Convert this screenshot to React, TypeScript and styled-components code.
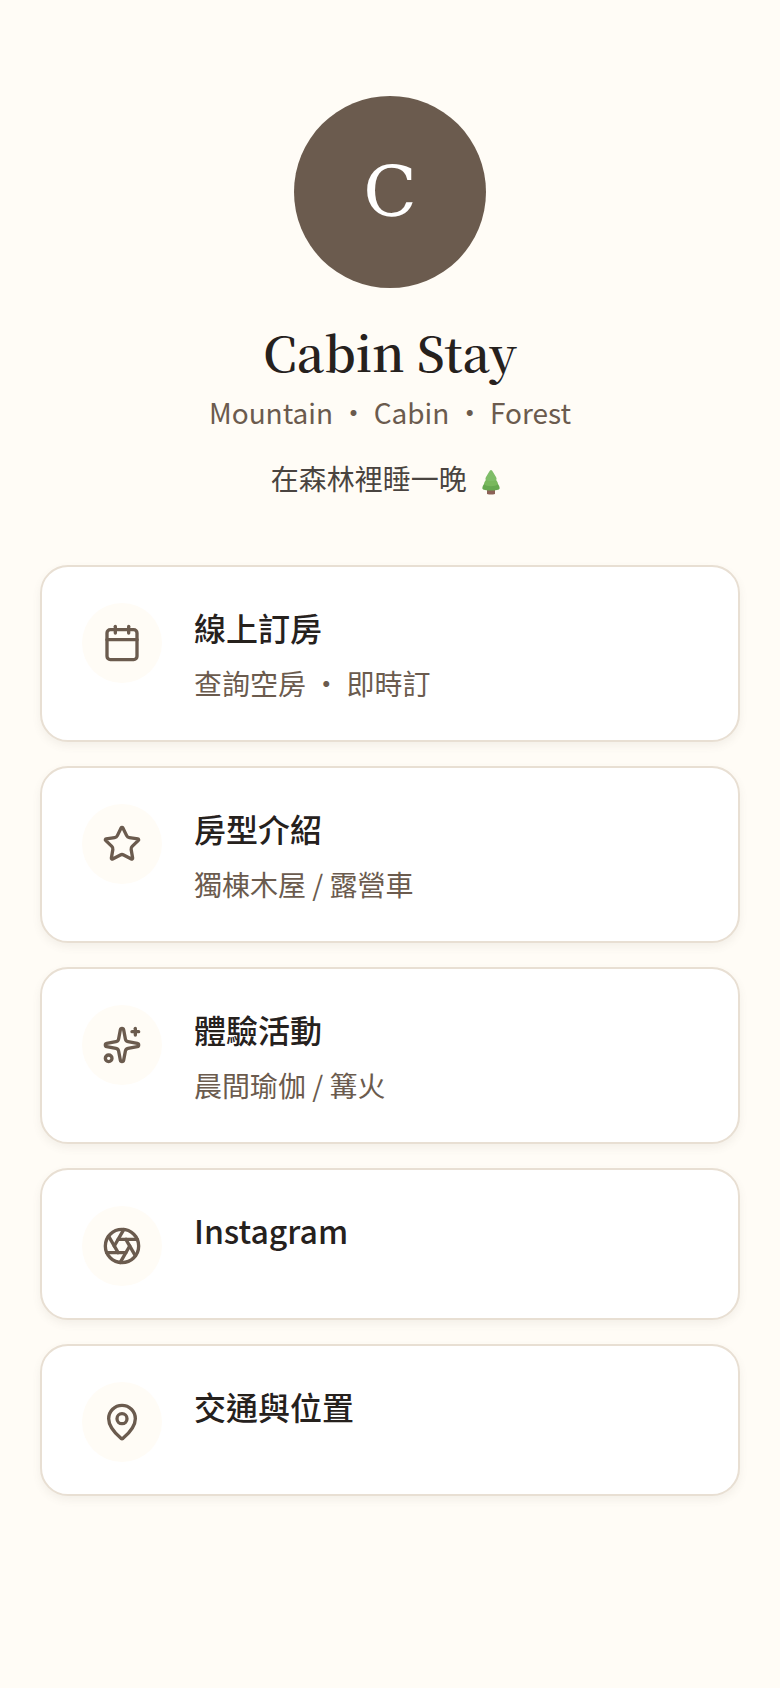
import React from "react";
import styled, { createGlobalStyle } from "styled-components";
import { Calendar, Star, Sparkles, Aperture, MapPin } from "lucide-react";

const GlobalStyle = createGlobalStyle`
  * { box-sizing: border-box; }
  body { margin: 0; background: #fffcf6; font-family: "Noto Sans CJK TC", sans-serif; color: #26211d; }
`;
const Page = styled.main`
  padding: 96px 40px;
  display: flex;
  flex-direction: column;
`;
const Header = styled.header`
  display: flex;
  flex-direction: column;
  align-items: center;
  text-align: center;
  margin-bottom: 64px;
`;
const Avatar = styled.div`
  width: 192px;
  height: 192px;
  border-radius: 50%;
  background: #6b5b4e;
  color: #fff;
  display: flex;
  align-items: center;
  justify-content: center;
  font-family: "DejaVu Serif", serif;
  font-size: 70px;
  line-height: 96px;
`;
const Title = styled.h1`
  margin: 32px 0 0;
  font-family: "Noto Serif CJK TC", "Liberation Serif", serif;
  font-size: 48px;
  line-height: 64px;
  font-weight: 600;
`;
const Tagline = styled.p`
  margin: 4px 0 0;
  font-size: 28px;
  line-height: 48px;
  color: #6b5b4e;
`;
const Bio = styled.p`
  margin: 20px 0 0;
  font-size: 28px;
  line-height: 45px;
  color: #4a4440;
`;
const TreeIcon = styled.svg`
  width: 36px;
  height: 28px;
  vertical-align: -6px;
`;
const Links = styled.nav`
  display: flex;
  flex-direction: column;
  gap: 24px;
`;
const Card = styled.a`
  display: flex;
  gap: 32px;
  padding: 32px 40px;
  background: #fff;
  border: 2px solid #e8dfd3;
  border-radius: 28px;
  box-shadow: 0 4px 8px rgba(107, 91, 78, 0.08);
  color: inherit;
  text-decoration: none;
`;
const IconDisc = styled.span`
  width: 80px;
  height: 80px;
  margin-top: 4px;
  border-radius: 50%;
  background: #fffcf6;
  color: #6b5b4e;
  display: flex;
  align-items: center;
  justify-content: center;
`;
const CardText = styled.div`
  padding-top: 4px;
`;
const CardTitle = styled.div`
  font-size: 32px;
  line-height: 48px;
  font-weight: 500;
`;
const CardNote = styled.div`
  margin-top: 8px;
  font-size: 28px;
  line-height: 49px;
  color: #6b5b4e;
`;
const links = [
  { title: "線上訂房", note: "查詢空房 ・ 即時訂", Icon: Calendar },
  { title: "房型介紹", note: "獨棟木屋 / 露營車", Icon: Star },
  { title: "體驗活動", note: "晨間瑜伽 / 篝火", Icon: Sparkles },
  { title: "Instagram", Icon: Aperture },
  { title: "交通與位置", Icon: MapPin },
];
export default function App() {
  return (
    <Page>
      <GlobalStyle />
      <Header>
        <Avatar>C</Avatar>
        <Title>Cabin Stay</Title>
        <Tagline>Mountain ・ Cabin ・ Forest</Tagline>
        <Bio>
          在森林裡睡一晚{" "}
          <TreeIcon viewBox="0 0 36 28" role="img" aria-label="evergreen tree">
            <path d="M14 20h8v6q-4 1-8 0z" fill="#8c6257" />
            <path d="M18 9l7 7q4 5.500-1 6-6 1.200-12 0-5-.5-1-6z" fill="#66a850" />
            <path d="M18 5l5.500 7.500q3 4-.5 5-5 1.500-10 0-3.500-1-.5-5z" fill="#79b85d" />
            <path d="M18 2q1 0 2 2l3 5q1.500 3-1 3.500-4 1-8 0-2.500-.5-1-3.500l3-5q1-2 2-2z" fill="#7fbd68" />
          </TreeIcon>
        </Bio>
      </Header>
      <Links>
        {links.map(({ title, note, Icon }) => (
          <Card href="#" key={title}>
            <IconDisc><Icon size={40} strokeWidth={2} /></IconDisc>
            <CardText>
              <CardTitle>{title}</CardTitle>
              {note && <CardNote>{note}</CardNote>}
            </CardText>
          </Card>
        ))}
      </Links>
    </Page>
  );
}
